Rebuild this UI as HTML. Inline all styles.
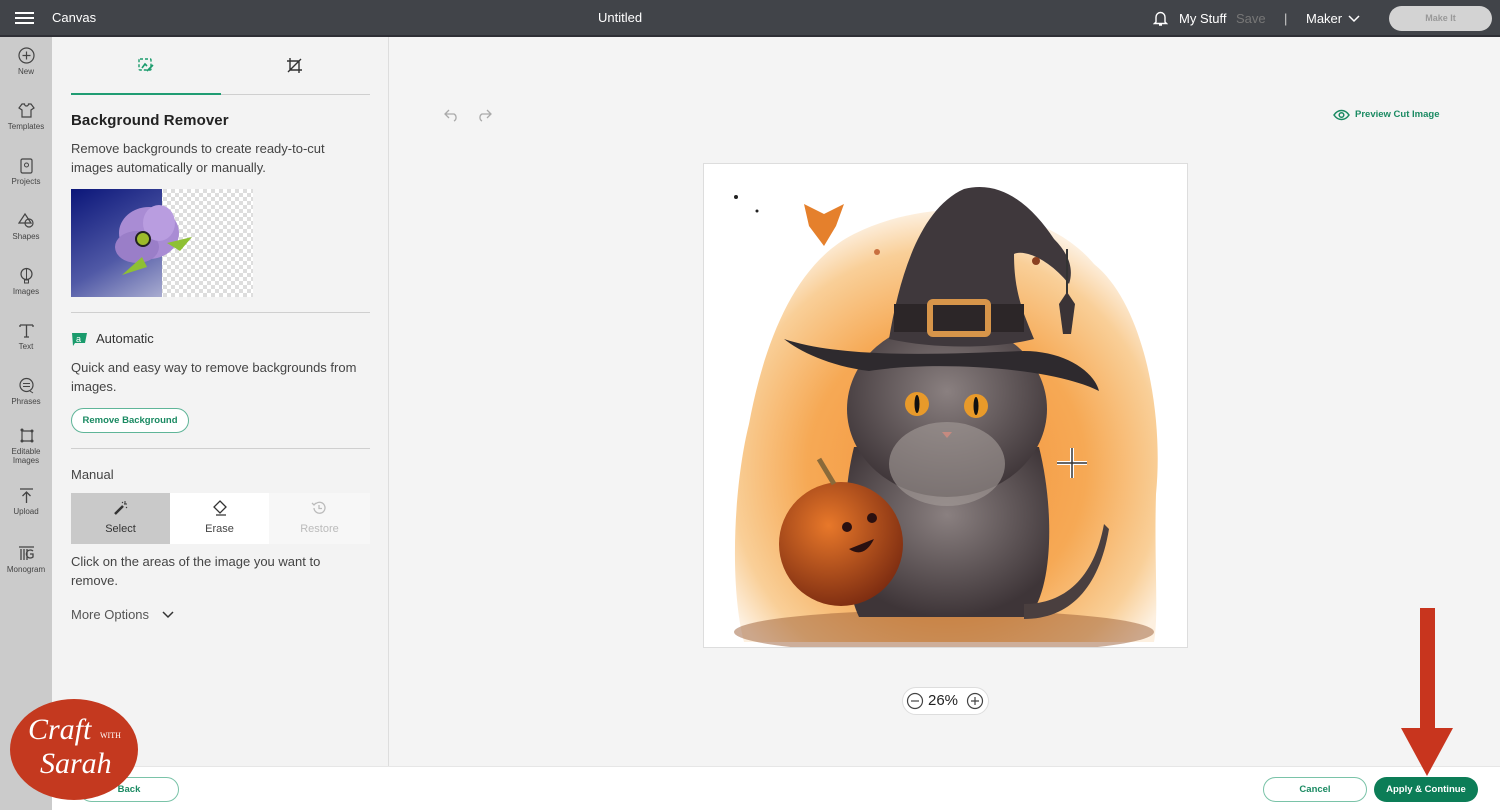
<!DOCTYPE html>
<html><head><meta charset="utf-8"><style>
*{margin:0;padding:0;box-sizing:border-box}
body{width:1500px;height:810px;overflow:hidden;font-family:"Liberation Sans",sans-serif;background:#f4f4f4;position:relative}
.top{position:absolute;left:0;top:0;width:1500px;height:37px;background:#414449;border-bottom:2px solid #2e2f35;color:#fff}
.side{position:absolute;left:0;top:37px;width:52px;height:773px;background:#cbcbcb}
.si{position:absolute;left:0;width:52px;text-align:center;font-size:8px;color:#444}
.si svg{display:block;margin:0 auto 3px}
.panel{position:absolute;left:52px;top:37px;width:337px;height:729px;background:#f3f3f3;border-right:1px solid #ddd}
.abs{position:absolute}
.txt{font-size:13px;color:#444;line-height:19px}
.bottom{position:absolute;left:52px;top:766px;width:1448px;height:44px;background:#fff;border-top:1px solid #e6e6e6}
.btn{position:absolute;border-radius:14px;font-size:9.5px;font-weight:bold;display:flex;align-items:center;justify-content:center}
</style></head><body>
<div class="top">
 <div class="abs" style="left:15px;top:12px;width:19px;height:2px;background:#fff;box-shadow:0 5px 0 #fff,0 10px 0 #fff"></div>
 <div class="abs" style="left:52px;top:10px;font-size:13px">Canvas</div>
 <div class="abs" style="left:598px;top:10px;font-size:13px">Untitled</div>
 <svg class="abs" style="left:1153px;top:10px" width="15" height="17" viewBox="0 0 15 17"><path d="M3 12V7a4.5 4.5 0 0 1 9 0v5l1.5 1.5h-12zM6 15h3" fill="none" stroke="#fff" stroke-width="1.4"/></svg>
 <div class="abs" style="left:1179px;top:11px;font-size:13px">My Stuff</div>
 <div class="abs" style="left:1236px;top:11px;font-size:13px;color:#777">Save</div>
 <div class="abs" style="left:1284px;top:11px;font-size:13px;color:#ccc">|</div>
 <div class="abs" style="left:1306px;top:11px;font-size:13px">Maker</div>
 <svg class="abs" style="left:1348px;top:15px" width="12" height="8"><path d="M1 1l5 5 5-5" fill="none" stroke="#fff" stroke-width="1.5"/></svg>
 <div class="abs" style="left:1389px;top:6px;width:103px;height:25px;border-radius:13px;background:#d3d3d3;color:#999;font-size:9px;font-weight:bold;text-align:center;line-height:25px">Make It</div>
</div>
<div class="side">
 <div class="si" style="top:10px"><svg width="17" height="17"><circle cx="8.5" cy="8.5" r="7.5" fill="none" stroke="#444" stroke-width="1.2"/><path d="M8.5 4.5v8M4.5 8.5h8" stroke="#444" stroke-width="1.2"/></svg>New</div>
 <div class="si" style="top:65px"><svg width="17" height="17"><path d="M4 2l-3 4 3 2v7h9V8l3-2-3-4h-2.5a2 2 0 0 1-4 0z" fill="none" stroke="#444" stroke-width="1.2"/></svg>Templates</div>
 <div class="si" style="top:120px"><svg width="17" height="17"><rect x="3" y="2" width="11" height="14" rx="1.5" fill="none" stroke="#444" stroke-width="1.2"/><circle cx="8.5" cy="8" r="2" fill="none" stroke="#444"/></svg>Projects</div>
 <div class="si" style="top:175px"><svg width="17" height="17"><path d="M7 2l-6 9h12z" fill="none" stroke="#444" stroke-width="1.2"/><circle cx="11" cy="11" r="4" fill="none" stroke="#444" stroke-width="1.2"/></svg>Shapes</div>
 <div class="si" style="top:230px"><svg width="17" height="17"><circle cx="8.5" cy="7" r="5.5" fill="none" stroke="#444" stroke-width="1.2"/><path d="M6.5 13h4v3h-4zM8.5 2v11" fill="none" stroke="#444"/></svg>Images</div>
 <div class="si" style="top:285px"><svg width="17" height="17"><path d="M2 3h13M8.5 3v12M6 15h5M2 3v2M15 3v2" stroke="#444" stroke-width="1.3" fill="none"/></svg>Text</div>
 <div class="si" style="top:340px"><svg width="17" height="17"><circle cx="8.5" cy="8" r="6.5" fill="none" stroke="#444" stroke-width="1.2"/><path d="M5 6.5h7M5 9.5h7M12 14l3 2" stroke="#444"/></svg>Phrases</div>
 <div class="si" style="top:390px"><svg width="17" height="17"><path d="M4 3v11h10V4H4" fill="none" stroke="#444" stroke-width="1.2"/><circle cx="4" cy="3" r="1.5" fill="#444"/><circle cx="14" cy="14" r="1.5" fill="#444"/><circle cx="4" cy="14" r="1.5" fill="#444"/><circle cx="14" cy="4" r="1.5" fill="#444"/></svg>Editable<br>Images</div>
 <div class="si" style="top:450px"><svg width="17" height="17"><path d="M2 2h13M8.5 5v11M4.5 9l4-4 4 4" fill="none" stroke="#444" stroke-width="1.3"/></svg>Upload</div>
 <div class="si" style="top:508px"><svg width="17" height="17"><path d="M1 2h15M3 4v11M6 4v11M9 4v11M15 6a4 4 0 1 0 0 6V9h-3" fill="none" stroke="#444" stroke-width="1.3"/></svg>Monogram</div>
</div>
<div class="panel">
 <svg class="abs" style="left:86px;top:21px" width="16" height="15"><rect x="1" y="1" width="12" height="11" rx="1" fill="none" stroke="#1a9b6c" stroke-width="1.4" stroke-dasharray="3 2"/><path d="M4 10l3-4 2 2M9 13l6-6" stroke="#1a9b6c" stroke-width="1.6" fill="none"/></svg>
 <svg class="abs" style="left:234px;top:20px" width="17" height="17"><path d="M4 1v12h12M1 4h12v12M2 15L15 2" fill="none" stroke="#333" stroke-width="1.4"/></svg>
 <div class="abs" style="left:19px;top:56px;width:150px;height:2px;background:#1f9c72"></div>
 <div class="abs" style="left:169px;top:57px;width:149px;height:1px;background:#cfcfcf"></div>
 <div class="abs" style="left:19px;top:75px;font-size:15px;color:#222;font-weight:bold;letter-spacing:0.1px">Background Remover</div>
 <div class="abs txt" style="left:19px;top:102px">Remove backgrounds to create ready-to-cut<br>images automatically or manually.</div>
 <div class="abs" style="left:19px;top:152px;width:182px;height:108px;background-color:#fff;background-image:linear-gradient(45deg,#ddd 25%,transparent 25%,transparent 75%,#ddd 75%),linear-gradient(45deg,#ddd 25%,transparent 25%,transparent 75%,#ddd 75%);background-size:8px 8px;background-position:0 0,4px 4px"></div>
 <div class="abs" style="left:19px;top:152px;width:91px;height:108px;background:linear-gradient(150deg,#0b1679,#5059a6 60%,#a9acd0)"></div>
 <svg class="abs" style="left:55px;top:158px" width="110" height="100"><ellipse cx="42" cy="38" rx="30" ry="26" fill="#a98cd4"/><ellipse cx="30" cy="52" rx="22" ry="16" fill="#9a7ec8"/><ellipse cx="52" cy="28" rx="16" ry="18" fill="#b99de0"/><circle cx="36" cy="44" r="7" fill="#9dbb2a" stroke="#222" stroke-width="2"/><path d="M60 48l25-6-12 14zM15 80l20-18 5 10z" fill="#8ec034"/></svg>
 <div class="abs" style="left:19px;top:275px;width:299px;height:1px;background:#cfcfcf"></div>
 <svg class="abs" style="left:19px;top:295px" width="17" height="15"><path d="M1 1h15l-2 10H4l-2 3z" fill="#1a9b6c"/><text x="5" y="10" font-size="9" fill="#fff" font-family="Liberation Sans">a</text></svg>
 <div class="abs" style="left:44px;top:294px;font-size:13px;color:#333">Automatic</div>
 <div class="abs txt" style="left:19px;top:321px">Quick and easy way to remove backgrounds from<br>images.</div>
 <div class="btn" style="left:19px;top:371px;width:118px;height:25px;border:1.5px solid #5fb598;color:#1a8a62;background:#fff">Remove Background</div>
 <div class="abs" style="left:19px;top:411px;width:299px;height:1px;background:#cfcfcf"></div>
 <div class="abs" style="left:19px;top:430px;font-size:13px;color:#444">Manual</div>
 <div class="abs" style="left:19px;top:456px;width:99px;height:51px;background:#c9c9c9;text-align:center;font-size:11px;color:#333;padding-top:30px">Select</div>
 <div class="abs" style="left:118px;top:456px;width:99px;height:51px;background:#fff;text-align:center;font-size:11px;color:#444;padding-top:30px">Erase</div>
 <div class="abs" style="left:217px;top:456px;width:101px;height:51px;background:#f7f7f7;text-align:center;font-size:11px;color:#bbb;padding-top:30px">Restore</div>
 <svg class="abs" style="left:61px;top:463px" width="16" height="16"><path d="M2 14l8-8" stroke="#333" stroke-width="2.5"/><path d="M12 1v3M14 4h-3M9 2l1 1M14 8l-1-1" stroke="#333"/></svg>
 <svg class="abs" style="left:160px;top:463px" width="16" height="16"><path d="M8 1l6 6-6 6-6-6zM4 15h10" fill="none" stroke="#333" stroke-width="1.3"/></svg>
 <svg class="abs" style="left:259px;top:463px" width="16" height="16"><path d="M3 8a5.5 5.5 0 1 0 2-4.5M1 3l2 2 2-2M8 5v3.5h3" fill="none" stroke="#bbb" stroke-width="1.3"/></svg>
 <div class="abs txt" style="left:19px;top:515px">Click on the areas of the image you want to<br>remove.</div>
 <div class="abs" style="left:19px;top:570px;font-size:13px;color:#555">More Options</div>
 <svg class="abs" style="left:110px;top:574px" width="12" height="8"><path d="M1 1l5 5 5-5" fill="none" stroke="#333" stroke-width="1.5"/></svg>
</div>
<svg class="abs" style="left:444px;top:108px" width="16" height="14"><path d="M5 2L1 6l4 4M1 6h9a4 4 0 0 1 0 7" fill="none" stroke="#aaa" stroke-width="1.3"/></svg>
<svg class="abs" style="left:476px;top:108px" width="16" height="14"><path d="M11 2l4 4-4 4M15 6H6a4 4 0 0 0 0 7" fill="none" stroke="#aaa" stroke-width="1.3"/></svg>
<svg class="abs" style="left:1333px;top:109px" width="17" height="12"><path d="M1 6c4-6 11-6 15 0-4 6-11 6-15 0z" fill="none" stroke="#1a8a62" stroke-width="1.5"/><circle cx="8.5" cy="6" r="2.3" fill="none" stroke="#1a8a62" stroke-width="1.5"/></svg>
<div class="abs" style="left:1355px;top:109px;font-size:9.5px;font-weight:bold;color:#1a8a62">Preview Cut Image</div>
<div class="abs" style="left:703px;top:163px;width:485px;height:485px;background:#fff;border:1px solid #ddd;overflow:hidden">
<svg width="484" height="484" viewBox="0 0 484 484">
 <defs>
  <radialGradient id="og" cx="0.5" cy="0.6" r="0.6"><stop offset="0" stop-color="#f3923a"/><stop offset="0.55" stop-color="#f6a955"/><stop offset="0.85" stop-color="#f9cf98"/><stop offset="1" stop-color="#fdf0e0"/></radialGradient>
  <radialGradient id="pk" cx="0.4" cy="0.35" r="0.7"><stop offset="0" stop-color="#e8782a"/><stop offset="1" stop-color="#7a2a10"/></radialGradient>
  <radialGradient id="ct" cx="0.5" cy="0.4" r="0.6"><stop offset="0" stop-color="#8a8080"/><stop offset="1" stop-color="#3e3538"/></radialGradient>
 </defs>
 <path d="M40 478C25 420 30 320 45 260 60 180 90 100 150 70 230 30 340 40 390 100 440 140 460 250 452 330 450 400 455 450 450 478z" fill="url(#og)"/>
 <ellipse cx="240" cy="468" rx="210" ry="22" fill="#9b5e35" opacity="0.5"/>
 <path d="M150 283c-15 60-10 140 5 170h170c25-30 25-110 10-170z" fill="url(#ct)"/>
 <path d="M320 440c40 0 70-25 80-80l5 5c-10 60-40 90-85 90z" fill="#4a3f3f"/>
 <ellipse cx="243" cy="245" rx="100" ry="88" fill="url(#ct)"/>
 <ellipse cx="243" cy="300" rx="58" ry="42" fill="#a59c9a" opacity="0.6"/>
 <circle cx="213" cy="240" r="12" fill="#e89a2a"/><circle cx="272" cy="242" r="12" fill="#e89a2a"/>
 <ellipse cx="213" cy="240" rx="2.5" ry="9" fill="#111"/><ellipse cx="272" cy="242" rx="2.5" ry="9" fill="#111"/>
 <path d="M238 268l10 0-5 6z" fill="#c58a80"/>
 <path d="M80 175c60 20 160 15 240 12 40 0 70 20 75 40-50-25-170-30-230-20-40-5-70-20-85-32z" fill="#2e2a2e"/>
 <path d="M185 175c10-60 30-130 75-150 40-10 70 20 90 50 15 15 20 30 15 45-20-25-45-35-55-30 0 40 10 60 20 85-40 10-100 10-145 0z" fill="#3f383c"/>
 <rect x="190" y="140" width="130" height="28" fill="#2c2628"/>
 <rect x="226" y="138" width="58" height="32" rx="3" fill="none" stroke="#d7954a" stroke-width="6"/>
 <path d="M363 85v55" stroke="#333" stroke-width="2"/><path d="M355 140l8-12 8 12-4 30h-8z" fill="#3a3336"/>
 <path d="M100 40l20 10 20-10-8 22-12 20-15-20z" fill="#e5802c"/>
 <circle cx="137" cy="380" r="62" fill="url(#pk)"/>
 <path d="M130 320l-15-25" stroke="#8a6a3a" stroke-width="5"/>
 <circle cx="143" cy="363" r="5" fill="#2a1010"/><circle cx="168" cy="354" r="5" fill="#2a1010"/>
 <path d="M145 385q15 10 25-10z" fill="#2a1010"/>
 <circle cx="32" cy="33" r="2" fill="#222"/><circle cx="53" cy="47" r="1.5" fill="#222"/><circle cx="173" cy="88" r="3" fill="#c87040"/><circle cx="332" cy="97" r="4" fill="#8a4020"/>
 <path d="M368 284v30M353 299h30" stroke="#fff" stroke-width="4"/><path d="M368 284v30M353 299h30" stroke="#333" stroke-width="1.5"/>
</svg></div>
<div class="abs" style="left:902px;top:687px;width:87px;height:28px;border-radius:14px;background:#fff;border:1px solid #ddd"></div>
<svg class="abs" style="left:906px;top:692px" width="18" height="18"><circle cx="9" cy="9" r="7.5" fill="none" stroke="#444" stroke-width="1.2"/><path d="M5 9h8" stroke="#444" stroke-width="1.2"/></svg>
<div class="abs" style="left:928px;top:692px;font-size:15px;color:#222">26%</div>
<svg class="abs" style="left:966px;top:692px" width="18" height="18"><circle cx="9" cy="9" r="7.5" fill="none" stroke="#444" stroke-width="1.2"/><path d="M5 9h8M9 5v8" stroke="#444" stroke-width="1.2"/></svg>
<div class="bottom"></div>
<div class="btn" style="left:79px;top:777px;width:100px;height:25px;border:1.5px solid #7ac3a8;color:#1a8a62;background:#fff">Back</div>
<div class="btn" style="left:1263px;top:777px;width:104px;height:25px;border:1.5px solid #7ac3a8;color:#1a8a62;background:#fff">Cancel</div>
<div class="btn" style="left:1374px;top:777px;width:104px;height:25px;background:#0c7d57;color:#fff">Apply &amp; Continue</div>
<div class="abs" style="left:1420px;top:608px;width:15px;height:122px;background:#c8351e"></div>
<svg class="abs" style="left:1401px;top:728px" width="52" height="50"><path d="M0 0h52L26 48z" fill="#c8351e"/></svg>
<div class="abs" style="left:10px;top:699px;width:128px;height:101px;border-radius:50%;background:#c4391f;color:#fff;font-family:'Liberation Serif',serif;font-style:italic">
 <div class="abs" style="left:18px;top:14px;font-size:30px">Craft</div>
 <div class="abs" style="left:90px;top:32px;font-size:8px;font-style:normal">WITH</div>
 <div class="abs" style="left:30px;top:48px;font-size:30px">Sarah</div>
</div>
</body></html>
